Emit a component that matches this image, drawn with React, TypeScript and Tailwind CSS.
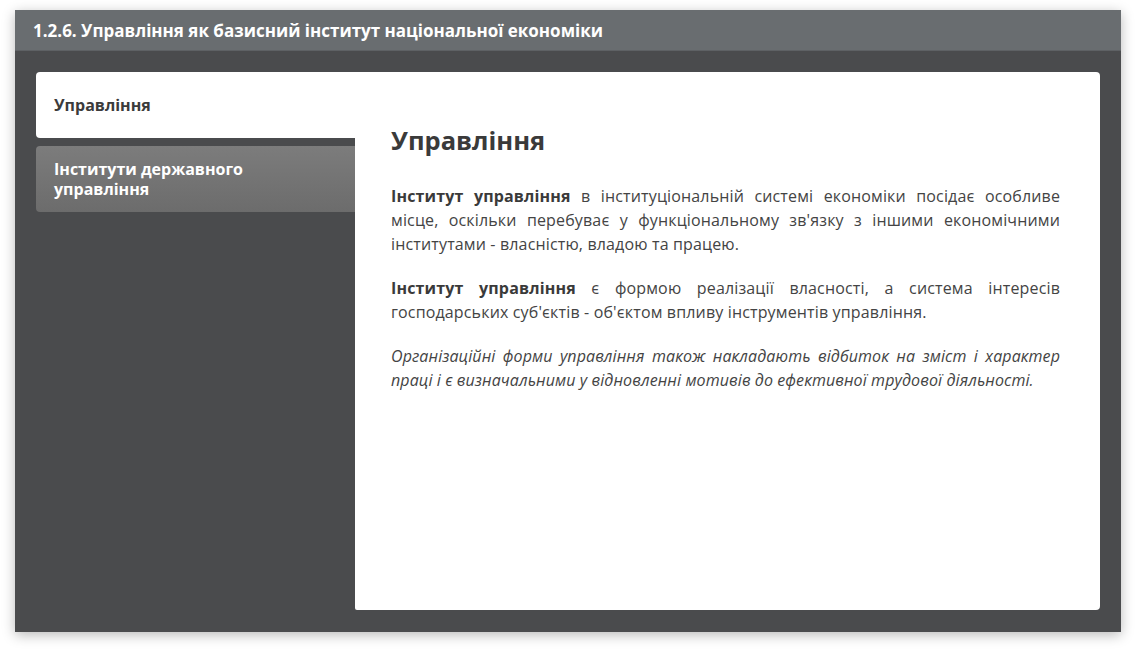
const paragraphs = [
  {
    bold: "Інститут управління",
    text: " в інституціональній системі економіки посідає особливе місце, оскільки перебуває у функціональному зв'язку з іншими економічними інститутами - власністю, владою та працею.",
  },
  {
    bold: "Інститут управління",
    text: " є формою реалізації власності, а система інтересів господарських суб'єктів - об'єктом впливу інструментів управління.",
  },
];

export default function App() {
  return (
    <div className="min-h-[653px] bg-white pt-[10px] pl-[15px]" style={{ fontFamily: '"Open Sans", "Noto Sans", sans-serif' }}>
      <div className="flex h-[622px] w-[1106px] flex-col bg-[#4a4b4d] shadow-[0_3px_12px_rgba(0,0,0,0.28)]">
        <div className="flex h-[41px] items-center border-b border-[#5e6164] bg-[#696d70] pt-[1px] pl-[18px] text-[17px] font-bold text-white">
          1.2.6. Управління як базисний інститут національної економіки
        </div>

        <div className="flex flex-1 px-[21px] pt-[21px] pb-[22px]">
          <div className="flex w-[319px] flex-col gap-[8px]">
            <div className="flex h-[66px] items-center rounded-l-[4px] bg-white pl-[18px] text-[16px] font-bold text-[#3b3b3b]">
              Управління
            </div>
            <div className="flex h-[66px] items-center rounded-l-[4px] bg-gradient-to-b from-[#7c7c7c] to-[#6c6c6c] pl-[18px] text-[16px] leading-[20px] font-bold text-white">
              Інститути державного
              <br />
              управління
            </div>
          </div>

          <div className="flex-1 rounded-r-[4px] rounded-bl-[2px] bg-white pt-[50px] pr-[40px] pl-[36px] text-[#444]">
            <h1 className="mb-[26px] text-[25.5px] leading-[36px] font-bold text-[#3a3a3a]">Управління</h1>
            {paragraphs.map((p, i) => (
              <p key={i} className="mb-[20px] text-justify text-[16px] leading-[24px] tracking-[0.15px]">
                <b className="font-bold text-[#3a3a3a]">{p.bold}</b>
                {p.text}
              </p>
            ))}
            <p className="text-justify text-[16px] leading-[24px] tracking-[0.1px] italic">
              Організаційні форми управління також накладають відбиток на зміст і характер праці і є визначальними у відновленні мотивів до ефективної трудової діяльності.
            </p>
          </div>
        </div>
      </div>
    </div>
  );
}
